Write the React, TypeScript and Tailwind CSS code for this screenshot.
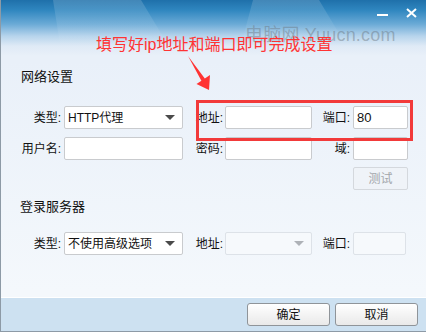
import { ReactNode } from 'react';

const FONT = "font-['Liberation_Sans','Noto_Sans_CJK_SC',sans-serif]";

function Label({ w, children, muted }: { w: string; children: ReactNode; muted?: boolean }) {
  return (
    <span className={`${w} shrink-0 text-right text-[12px] leading-none ${muted ? 'text-[#222]' : 'text-[#111]'}`}>
      {children}
    </span>
  );
}

function Field({ w, value, disabled }: { w: string; value?: string; disabled?: boolean }) {
  return (
    <div
      className={`${w} h-[23px] shrink-0 rounded-[2px] border flex items-center px-[3px] text-[13px] text-[#111] ${
        disabled ? 'bg-[#f6f9fc] border-[#dde2e8]' : 'bg-white border-[#c9cbce]'
      }`}
    >
      {value}
    </div>
  );
}

function Select({ w, value, disabled }: { w: string; value?: string; disabled?: boolean }) {
  return (
    <div
      className={`${w} h-[23px] shrink-0 rounded-[2px] border flex items-center justify-between pl-[3px] pr-[7px] text-[12px] text-[#111] ${
        disabled ? 'bg-[#f6f9fc] border-[#dde2e8]' : 'bg-white border-[#c9cbce]'
      }`}
    >
      <span>{value}</span>
      <span
        className={`w-0 h-0 border-l-[5px] border-r-[5px] border-t-[5px] border-l-transparent border-r-transparent ${
          disabled ? 'border-t-[#aeb2b7]' : 'border-t-[#4a4a4a]'
        }`}
      />
    </div>
  );
}

function Btn({ children }: { children: ReactNode }) {
  return (
    <button className="w-[83px] h-[23px] rounded-[3px] border border-[#8f9499] bg-[linear-gradient(to_bottom,#ffffff,#e9e9e9)] text-[12px] text-[#111] flex items-center justify-center">
      {children}
    </button>
  );
}

export default function App() {
  return (
    <div className={`relative w-[426px] h-[332px] overflow-hidden flex flex-col border-l border-b border-[#8d9aa6] bg-[linear-gradient(to_bottom,#e9f0f9_60px,#f4f8fc_290px)] ${FONT}`}>
      {/* ── Title bar ─────────────────────────────────────────── */}
      <div className="relative h-[64px] shrink-0 bg-[linear-gradient(to_bottom,#1f70aa_0px,#2f86bf_10px,#6aaad6_24px,#b6d4ec_36px,#dfeaf6_46px,#e9f0f9_56px)]">
        <svg className="absolute inset-0" width="426" height="64" viewBox="0 0 426 64">
          <defs>
            <linearGradient id="streak" x1="0" y1="0" x2="0" y2="1">
              <stop offset="0" stopColor="#ffffff" stopOpacity="0.16" />
              <stop offset="1" stopColor="#ffffff" stopOpacity="0" />
            </linearGradient>
          </defs>
          <polygon points="52,0 140,0 170,50 60,50" fill="url(#streak)" />
          <polygon points="252,0 318,0 345,45 240,45" fill="url(#streak)" />
        </svg>
        <div className="relative flex justify-end items-start gap-[18px] pt-[8px] pr-[9px]">
          <span className="mt-[6px] w-[11px] h-[2px] bg-white" />
          <svg width="11" height="10" viewBox="0 0 11 10">
            <path d="M1 1 L10 9 M10 1 L1 9" stroke="#fff" strokeWidth="2" />
          </svg>
        </div>
        <span className="absolute left-[244px] top-[22px] text-[18px] tracking-[0.2px] text-[#6b7680]/45 font-['Liberation_Sans','Noto_Sans_CJK_SC',sans-serif]">
          电脑网 Yuucn.com
        </span>
      </div>

      {/* ── 网络设置 ───────────────────────────────────────────── */}
      <div className="flex flex-col">
        <h2 className="pl-[20px] -mt-[-4px] text-[13px] leading-[18px] text-[#111]">网络设置</h2>

        <div className="mt-[20px] flex items-center">
          <Label w="w-[60px]">类型:</Label>
          <div className="w-[3px]" />
          <Select w="w-[119px]" value="HTTP代理" />
          <Label w="w-[40px]">地址:</Label>
          <div className="w-[2px]" />
          <Field w="w-[87px]" />
          <Label w="w-[38px]">端口:</Label>
          <div className="w-[3px]" />
          <Field w="w-[55px]" value="80" />
        </div>

        <div className="mt-[8px] flex items-center">
          <Label w="w-[60px]">用户名:</Label>
          <div className="w-[3px]" />
          <Field w="w-[119px]" />
          <Label w="w-[40px]">密码:</Label>
          <div className="w-[2px]" />
          <Field w="w-[87px]" />
          <Label w="w-[38px]">域:</Label>
          <div className="w-[3px]" />
          <Field w="w-[55px]" />
        </div>

        <div className="mt-[7px] pl-[352px]">
          <button className="w-[55px] h-[23px] rounded-[2px] border border-[#d4d8dd] bg-[#eff3f8] text-[12px] text-[#a2a6ab] flex items-center justify-center">
            测试
          </button>
        </div>
      </div>

      {/* ── 登录服务器 ─────────────────────────────────────────── */}
      <div className="flex flex-col">
        <h2 className="pl-[19px] mt-[8px] text-[13px] leading-[18px] text-[#111]">登录服务器</h2>

        <div className="mt-[16px] flex items-center">
          <Label w="w-[60px]">类型:</Label>
          <div className="w-[3px]" />
          <Select w="w-[119px]" value="不使用高级选项" />
          <Label w="w-[40px]">地址:</Label>
          <div className="w-[2px]" />
          <Select w="w-[87px]" disabled />
          <Label w="w-[38px]">端口:</Label>
          <div className="w-[3px]" />
          <Field w="w-[53px]" disabled />
        </div>
      </div>

      {/* ── Footer ─────────────────────────────────────────────── */}
      <div className="mt-auto h-[34px] border-t border-white bg-[#cde1f1] flex items-center justify-end gap-[5px] pr-[8px]">
        <Btn>确定</Btn>
        <Btn>取消</Btn>
      </div>

      {/* ── Annotation overlay ─────────────────────────────────── */}
      <span className="absolute left-[95px] top-[34px] text-[16px] leading-[22px] text-[#ff3333] font-['Liberation_Sans','Noto_Sans_CJK_SC',sans-serif]">
        填写好ip地址和端口即可完成设置
      </span>
      <svg className="absolute left-0 top-0 pointer-events-none" width="426" height="332" viewBox="0 0 426 332">
        <polygon points="187,56 203.8,78.6 209,75 208,90 195.5,84 200.4,80.8" fill="#ff3333" />
      </svg>
      <div className="absolute left-[195px] top-[100px] w-[217px] h-[41px] border-[3px] border-[#f23a3a] pointer-events-none" />
    </div>
  );
}
